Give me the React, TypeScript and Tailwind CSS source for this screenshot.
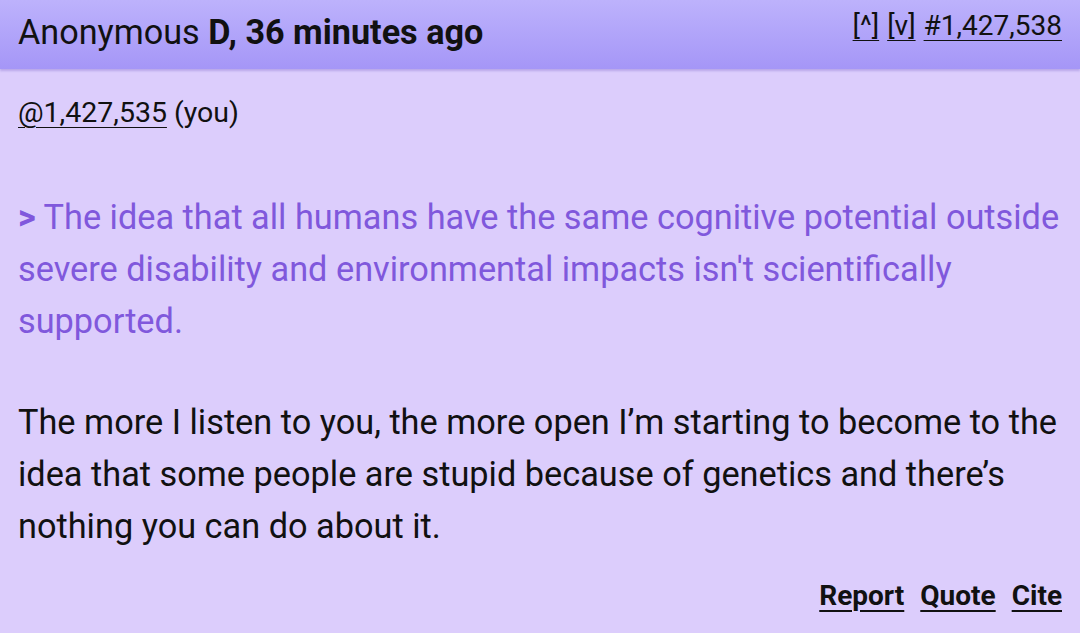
export default function App() {
  return (
    <div
      className="h-[633px] w-[1080px] overflow-hidden bg-[#dccdfc] text-[#111111]"
      style={{ fontFamily: "Roboto, 'Noto Sans', sans-serif" }}
    >
      <div className="flex h-[69px] items-start justify-between bg-gradient-to-b from-[#bdb2fc] to-[#a596f7] px-[18px] shadow-[0_2px_2px_rgba(120,100,200,0.35)]">
        <div className="pt-[12px] text-[34.2px] leading-[40px]">
          Anonymous <span className="font-bold">D, 36 minutes ago</span>
        </div>
        <div className="flex gap-[8px] pt-[10px] text-[28px] leading-[32px]">
          <a className="underline decoration-1 underline-offset-[5px]">[^]</a>
          <a className="underline decoration-1 underline-offset-[5px]">[v]</a>
          <a className="underline decoration-1 underline-offset-[5px]">#1,427,538</a>
        </div>
      </div>

      <div className="flex flex-col px-[18px]">
        <div className="pt-[26px] text-[28.5px] leading-[36px]">
          <a className="underline decoration-1 underline-offset-[5px]">@1,427,535</a> (you)
        </div>

        <p className="mt-[60px] text-[34.3px] leading-[52px] text-[#8058dc]">
          <span className="font-bold">&gt;</span> The idea that all humans have the same cognitive potential outside
          severe disability and environmental impacts isn't scientifically supported.
        </p>

        <p className="mt-[49px] text-[34.3px] leading-[52px]">
          The more I listen to you, the more open I’m starting to become to the idea that some
          people are stupid because of genetics and there’s nothing you can do about it.
        </p>

        <div className="mt-[26px] flex justify-end gap-[16px] text-[28px] font-bold leading-[36px]">
          <a className="underline decoration-2 underline-offset-[5px]">Report</a>
          <a className="underline decoration-2 underline-offset-[5px]">Quote</a>
          <a className="underline decoration-2 underline-offset-[5px]">Cite</a>
        </div>
      </div>
    </div>
  );
}
